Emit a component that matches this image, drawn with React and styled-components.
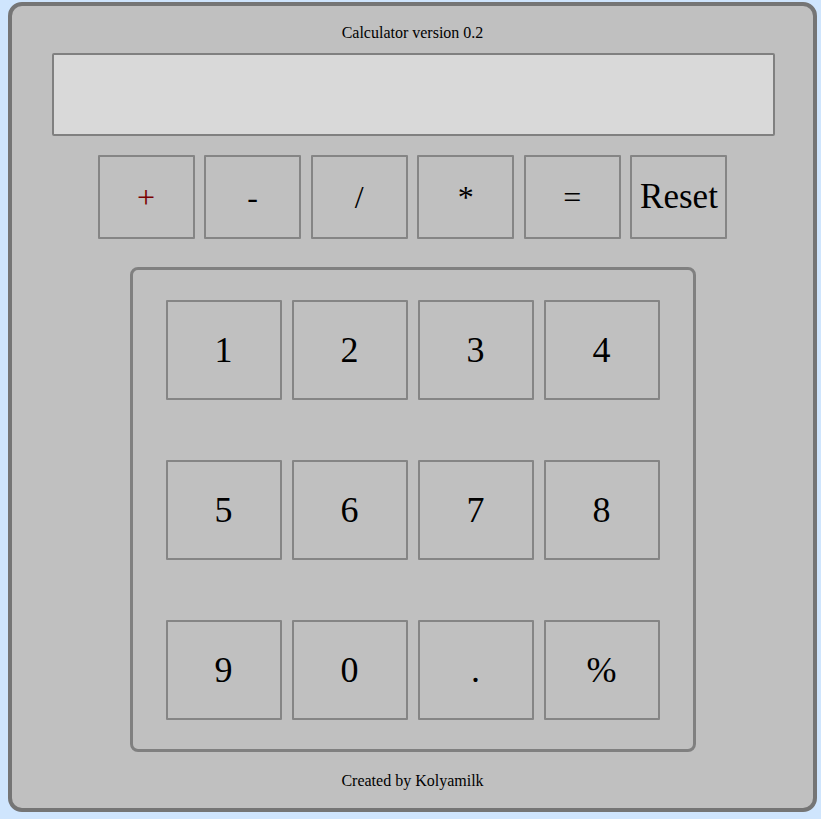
import React from "react";
import styled, { createGlobalStyle } from "styled-components";

const GlobalStyle = createGlobalStyle`
  body {
    margin: 2px 4px 8px 8px;
    background-color: #cfe5fd;
    font-family: "Liberation Serif", "Times New Roman", serif;
  }
`;

const Card = styled.div`
  width: 801px;
  background-color: #c0c0c0;
  border: 4px solid #757575;
  border-radius: 14px;
  display: flex;
  flex-direction: column;
  align-items: center;
`;

const Caption = styled.div`
  font-size: 16px;
  line-height: 18px;
  color: #000;
  margin-top: ${props => props.top}px;
  margin-bottom: ${props => props.bottom}px;
`;

const Display = styled.div`
  width: 719px;
  height: 79px;
  background-color: #d9d9d9;
  border: 2px solid #808080;
  border-radius: 2px;
  margin-left: 1px;
`;

const OperatorRow = styled.div`
  display: flex;
  gap: 9.6px;
  margin-top: 19px;
`;

const Key = styled.button`
  box-sizing: border-box;
  width: ${props => props.w}px;
  height: ${props => props.h}px;
  padding: 0;
  background-color: #c0c0c0;
  border: 2px solid #858585;
  border-radius: 1px;
  font-family: "Liberation Serif", "Times New Roman", serif;
  font-size: ${props => props.size || 36}px;
  color: ${props => props.colour || "#000"};
  display: flex;
  align-items: center;
  justify-content: center;
`;

const Keypad = styled.div`
  margin-top: 28px;
  padding: 30px 33px 29px 33px;
  border: 3px solid #808080;
  border-radius: 8px;
  display: grid;
  grid-template-columns: repeat(4, 116px);
  grid-auto-rows: 100px;
  column-gap: 10px;
  row-gap: 60px;
`;

const operators = ["+", "-", "/", "*", "=", "Reset"];
const digits = ["1", "2", "3", "4", "5", "6", "7", "8", "9", "0", ".", "%"];

export default function App() {
  return (
    <>
      <GlobalStyle />
      <Card>
        <Caption top={18} bottom={11}>
          Calculator version 0.2
        </Caption>
        <Display />
        <OperatorRow>
          {operators.map(op => (
            <Key
              key={op}
              w={97}
              h={84}
              size={op === "Reset" ? 35 : 32}
              colour={op === "+" ? "#7a0000" : "#000"}
            >
              {op}
            </Key>
          ))}
        </OperatorRow>
        <Keypad>
          {digits.map(d => (
            <Key key={d} w={116} h={100}>
              {d}
            </Key>
          ))}
        </Keypad>
        <Caption top={20} bottom={18}>
          Created by Kolyamilk
        </Caption>
      </Card>
    </>
  );
}
